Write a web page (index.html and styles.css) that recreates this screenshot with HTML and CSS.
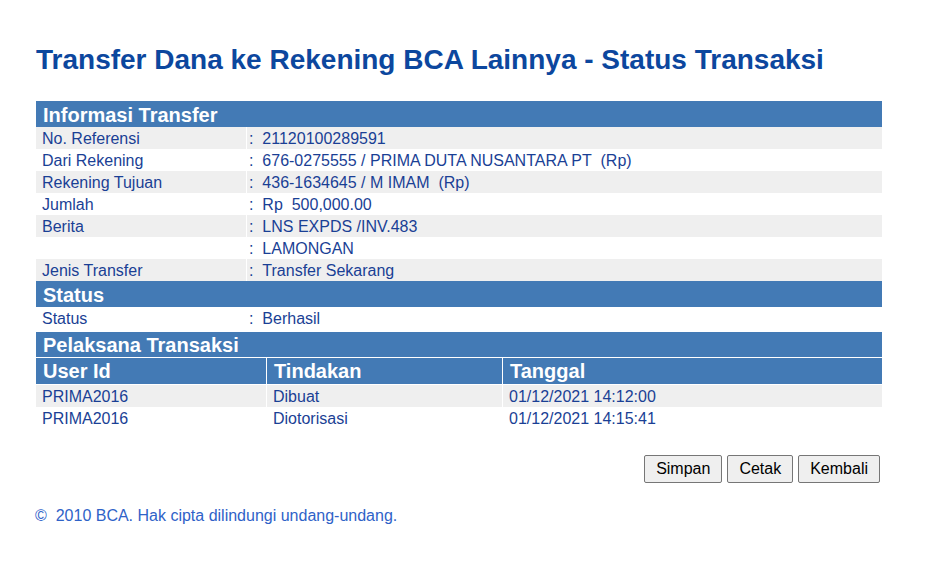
FILE: index.html
```html
<!DOCTYPE html>
<html>
<head>
<meta charset="utf-8">
<link rel="stylesheet" href="styles.css">
</head>
<body>
<div class="page">
  <h1 class="title">Transfer Dana ke Rekening BCA Lainnya - Status Transaksi</h1>

  <div class="section">
    <div class="sec-head">Informasi Transfer</div>
    <div class="row gray"><div class="lbl">No. Referensi</div><div class="val">:&nbsp;&nbsp;21120100289591</div></div>
    <div class="row"><div class="lbl">Dari Rekening</div><div class="val">:&nbsp;&nbsp;676-0275555 / PRIMA DUTA NUSANTARA PT&nbsp; (Rp)</div></div>
    <div class="row gray"><div class="lbl">Rekening Tujuan</div><div class="val">:&nbsp;&nbsp;436-1634645 / M IMAM&nbsp; (Rp)</div></div>
    <div class="row"><div class="lbl">Jumlah</div><div class="val">:&nbsp;&nbsp;Rp&nbsp; 500,000.00</div></div>
    <div class="row gray"><div class="lbl">Berita</div><div class="val">:&nbsp;&nbsp;LNS EXPDS /INV.483</div></div>
    <div class="row"><div class="lbl"></div><div class="val">:&nbsp;&nbsp;LAMONGAN</div></div>
    <div class="row gray"><div class="lbl">Jenis Transfer</div><div class="val">:&nbsp;&nbsp;Transfer Sekarang</div></div>
    <div class="sec-head">Status</div>
    <div class="row"><div class="lbl">Status</div><div class="val">:&nbsp;&nbsp;Berhasil</div></div>
  </div>

  <div class="section pelaksana">
    <div class="sec-head short">Pelaksana Transaksi</div>
    <div class="grid3 colhead"><div>User Id</div><div>Tindakan</div><div>Tanggal</div></div>
    <div class="grid3 gray"><div>PRIMA2016</div><div>Dibuat</div><div>01/12/2021 14:12:00</div></div>
    <div class="grid3"><div>PRIMA2016</div><div>Diotorisasi</div><div>01/12/2021 14:15:41</div></div>
  </div>

  <div class="actions">
    <button class="btn">Simpan</button>
    <button class="btn">Cetak</button>
    <button class="btn">Kembali</button>
  </div>

  <p class="footer">©&nbsp; 2010 BCA. Hak cipta dilindungi undang-undang.</p>
</div>
</body>
</html>
```

FILE: styles.css
```css
* { box-sizing: border-box; }
body {
  margin: 0;
  background: #ffffff;
  font-family: "Liberation Sans", Arial, sans-serif;
  color: #1a3f95;
}
.page {
  padding: 44px 0 0 36px;
  width: 882px;
}
.title {
  margin: 0 0 25px 0;
  font-size: 28px;
  line-height: 32px;
  font-weight: bold;
  color: #0c479e;
}
.section {
  width: 846px;
}
.sec-head {
  background: #437ab5;
  color: #ffffff;
  font-weight: bold;
  font-size: 20px;
  height: 26px;
  line-height: 28px;
  padding-left: 7px;
}
.sec-head.short {
  height: 25px;
  line-height: 26px;
}
.row {
  display: flex;
  height: 22px;
  line-height: 24px;
  font-size: 16px;
}
.gray { background: #efefef; }
.lbl {
  width: 211px;
  padding-left: 6px;
  border-right: 1px solid #ffffff;
}
.val {
  flex: 1;
  padding-left: 2px;
}
.pelaksana {
  margin-top: 3px;
}
.grid3 {
  display: grid;
  grid-template-columns: 230px 236px 1fr;
  font-size: 16px;
  height: 22px;
  line-height: 24px;
}
.grid3 > div {
  padding-left: 6px;
}
.grid3 > div + div {
  border-left: 1px solid #ffffff;
}
.colhead {
  margin-top: 1px;
  background: #437ab5;
  color: #ffffff;
  font-weight: bold;
  font-size: 20px;
  height: 27px;
  line-height: 27px;
  border-bottom: 1px solid #ffffff;
}
.colhead > div { padding-left: 7px; }
.actions {
  display: flex;
  justify-content: flex-end;
  gap: 5px;
  width: 844px;
  margin-top: 26px;
}
.btn {
  font-family: "Liberation Sans", Arial, sans-serif;
  font-size: 16px;
  color: #000000;
  background: #efefef;
  border: 1px solid #767676;
  border-radius: 2px;
  height: 28px;
  padding: 0 11px;
}
.footer {
  margin: 24px 0 0 -1px;
  font-size: 16px;
  line-height: 18px;
  color: #2f62c8;
}
```
